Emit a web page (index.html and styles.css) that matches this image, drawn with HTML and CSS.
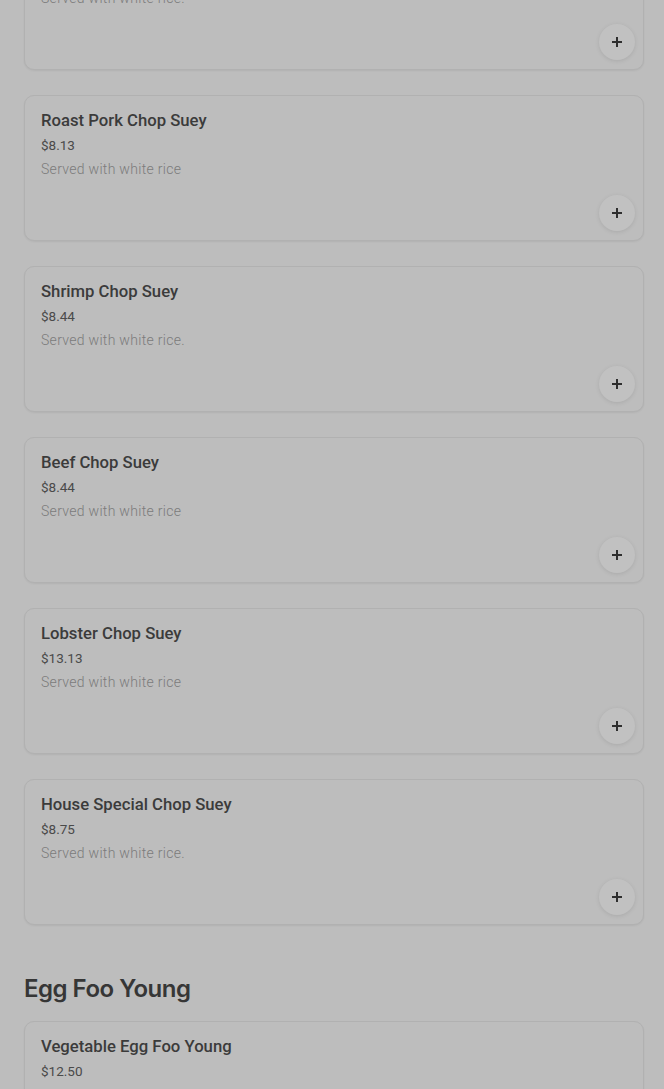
FILE: index.html
```html
<!DOCTYPE html>
<html lang="en">
<head>
  <meta charset="UTF-8">
  <meta name="viewport" content="width=device-width, initial-scale=1.0">
  <title>Menu</title>
  <link rel="stylesheet" href="styles.css">
</head>
<body>
  <main class="menu">
    <section class="category category-scrolled">
      <div class="items">
        <div class="item">
          <div class="item-name">Chicken Chop Suey</div>
          <div class="item-price">$8.13</div>
          <div class="item-desc">Served with white rice.</div>
          <div class="item-actions"><button class="add-btn"><svg viewBox="0 0 12 12" width="12" height="12"><path d="M6 1v10M1 6h10" stroke="currentColor" stroke-width="2"/></svg></button></div>
        </div>

        <div class="item">
          <div class="item-name">Roast Pork Chop Suey</div>
          <div class="item-price">$8.13</div>
          <div class="item-desc">Served with white rice</div>
          <div class="item-actions"><button class="add-btn"><svg viewBox="0 0 12 12" width="12" height="12"><path d="M6 1v10M1 6h10" stroke="currentColor" stroke-width="2"/></svg></button></div>
        </div>

        <div class="item">
          <div class="item-name">Shrimp Chop Suey</div>
          <div class="item-price">$8.44</div>
          <div class="item-desc">Served with white rice.</div>
          <div class="item-actions"><button class="add-btn"><svg viewBox="0 0 12 12" width="12" height="12"><path d="M6 1v10M1 6h10" stroke="currentColor" stroke-width="2"/></svg></button></div>
        </div>

        <div class="item">
          <div class="item-name">Beef Chop Suey</div>
          <div class="item-price">$8.44</div>
          <div class="item-desc">Served with white rice</div>
          <div class="item-actions"><button class="add-btn"><svg viewBox="0 0 12 12" width="12" height="12"><path d="M6 1v10M1 6h10" stroke="currentColor" stroke-width="2"/></svg></button></div>
        </div>

        <div class="item">
          <div class="item-name">Lobster Chop Suey</div>
          <div class="item-price">$13.13</div>
          <div class="item-desc">Served with white rice</div>
          <div class="item-actions"><button class="add-btn"><svg viewBox="0 0 12 12" width="12" height="12"><path d="M6 1v10M1 6h10" stroke="currentColor" stroke-width="2"/></svg></button></div>
        </div>

        <div class="item">
          <div class="item-name">House Special Chop Suey</div>
          <div class="item-price">$8.75</div>
          <div class="item-desc">Served with white rice.</div>
          <div class="item-actions"><button class="add-btn"><svg viewBox="0 0 12 12" width="12" height="12"><path d="M6 1v10M1 6h10" stroke="currentColor" stroke-width="2"/></svg></button></div>
        </div>
      </div>
    </section>

    <section class="category">
      <h2 class="category-title">Egg Foo Young</h2>
      <div class="items">
        <div class="item">
          <div class="item-name">Vegetable Egg Foo Young</div>
          <div class="item-price">$12.50</div>
          <div class="item-desc">Served with white rice.</div>
          <div class="item-actions"><button class="add-btn"><svg viewBox="0 0 12 12" width="12" height="12"><path d="M6 1v10M1 6h10" stroke="currentColor" stroke-width="2"/></svg></button></div>
        </div>
      </div>
    </section>
  </main>
</body>
</html>
```

FILE: styles.css
```css
:root {
  --bg-color: #bdbdbd;
  --card-bg: #bdbdbd;
  --border-color: #b1b1b1;
  --title-color: #3b3b3b;
  --price-color: #4a4a4a;
  --desc-color: #7b7b7b;
  --radius: 10px;
}

* {
  margin: 0;
  padding: 0;
  box-sizing: border-box;
}

html, body {
  height: 100%;
  overflow: hidden;
}

body {
  font-family: Roboto, 'Noto Sans', sans-serif;
  background-color: var(--bg-color);
  color: var(--title-color);
}

.menu {
  padding: 0 20px 0 24px;
}

/* list is scrolled: first card only shows its bottom part */
.category-scrolled {
  margin-top: -76px;
}

.category-title {
  font-family: Inter, 'Noto Sans', sans-serif;
  font-size: 24px;
  font-weight: 600;
  letter-spacing: -0.5px;
  line-height: 32px;
  color: #363636;
  margin-top: 48px;
  margin-bottom: 16px;
}

.items {
  display: flex;
  flex-direction: column;
  gap: 25px;
}

.item {
  background-color: var(--card-bg);
  border: 1px solid var(--border-color);
  border-radius: var(--radius);
  box-shadow: 0 1px 2px rgba(0, 0, 0, 0.06);
  padding: 13px 8px 9px 16px;
  display: flex;
  flex-direction: column;
}

.item-name {
  font-size: 16.7px;
  font-weight: 500;
  line-height: 24px;
  color: var(--title-color);
}

.item-price {
  font-size: 13.5px;
  line-height: 20px;
  margin-top: 2px;
  color: var(--price-color);
}

.item-desc {
  font-size: 14px;
  font-weight: 300;
  line-height: 20px;
  letter-spacing: 0.3px;
  margin-top: 4px;
  color: var(--desc-color);
}

.item-actions {
  display: flex;
  justify-content: flex-end;
  margin-top: 16px;
}

.add-btn {
  width: 36px;
  height: 36px;
  border-radius: 50%;
  border: none;
  background-color: #c1c1c1;
  box-shadow: 0 1px 4px rgba(0, 0, 0, 0.1);
  color: #2e2e2e;
  display: flex;
  align-items: center;
  justify-content: center;
  cursor: pointer;
}
```
